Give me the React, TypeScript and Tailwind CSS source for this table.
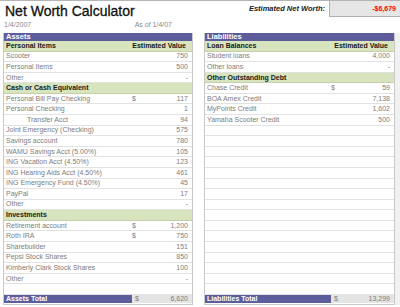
type Row =
  | { kind: 'sub'; label: string; right?: string }
  | { kind: 'item'; label: string; value: string; dollar?: boolean; indent?: boolean }
  | { kind: 'blank' }

const assets: Row[] = [
  { kind: 'sub', label: 'Personal Items', right: 'Estimated Value' },
  { kind: 'item', label: 'Scooter', value: '750' },
  { kind: 'item', label: 'Personal Items', value: '500' },
  { kind: 'item', label: 'Other', value: '-' },
  { kind: 'sub', label: 'Cash or Cash Equivalent' },
  { kind: 'item', label: 'Personal Bill Pay Checking', value: '117', dollar: true },
  { kind: 'item', label: 'Personal Checking', value: '1' },
  { kind: 'item', label: 'Transfer Acct', value: '94', indent: true },
  { kind: 'item', label: 'Joint Emergency (Checking)', value: '575' },
  { kind: 'item', label: 'Savings account', value: '780' },
  { kind: 'item', label: 'WAMU Savings Acct (5.00%)', value: '105' },
  { kind: 'item', label: 'ING Vacation Acct (4.50%)', value: '123' },
  { kind: 'item', label: 'ING Hearing Aids Acct (4.50%)', value: '461' },
  { kind: 'item', label: 'ING Emergency Fund (4.50%)', value: '45' },
  { kind: 'item', label: 'PayPal', value: '17' },
  { kind: 'item', label: 'Other', value: '-' },
  { kind: 'sub', label: 'Investments' },
  { kind: 'item', label: 'Retirement account', value: '1,200', dollar: true },
  { kind: 'item', label: 'Roth IRA', value: '750', dollar: true },
  { kind: 'item', label: 'Sharebuilder', value: '151' },
  { kind: 'item', label: 'Pepsi Stock Shares', value: '850' },
  { kind: 'item', label: 'Kimberly Clark Stock Shares', value: '100' },
  { kind: 'item', label: 'Other', value: '-' },
  { kind: 'blank' },
]

const liabilities: Row[] = [
  { kind: 'sub', label: 'Loan Balances', right: 'Estimated Value' },
  { kind: 'item', label: 'Student loans', value: '4,000' },
  { kind: 'item', label: 'Other loans', value: '-' },
  { kind: 'sub', label: 'Other Outstanding Debt' },
  { kind: 'item', label: 'Chase Credit', value: '59', dollar: true },
  { kind: 'item', label: 'BOA Amex Credit', value: '7,138' },
  { kind: 'item', label: 'MyPoints Credit', value: '1,602' },
  { kind: 'item', label: 'Yamaha Scooter Credit', value: '500' },
  ...Array.from({ length: 16 }, () => ({ kind: 'blank' } as Row)),
]

function Panel({ title, rows, totalLabel, total, dollarCol }: {
  title: string
  rows: Row[]
  totalLabel: string
  total: string
  dollarCol: string
}) {
  return (
    <div className="flex flex-col border-x border-b border-[#c9c9c9] h-[272px]">
      {/* section header */}
      <div className="h-[8px] bg-[#5d5d9c] text-white font-bold text-[7.5px] leading-[8px] pl-[2px]">{title}</div>

      <div className="flex flex-col h-[254px]">
        {rows.map((r, i) => {
          if (r.kind === 'sub') {
            return (
              <div key={i} className="flex-1 min-h-0 flex items-center bg-[#d7e4bd] border-b border-[#c4d0ab] px-[2px] text-[7px] leading-[8px] font-bold text-[#1a1a1a]">
                <span className="flex-1">{r.label}</span>
                {r.right && <span className="pr-[4px]">{r.right}</span>}
              </div>
            )
          }
          if (r.kind === 'blank') {
            return <div key={i} className="flex-1 min-h-0 border-b border-[#e2e2e2]" />
          }
          return (
            <div key={i} className="flex-1 min-h-0 flex items-center border-b border-[#e2e2e2] text-[7px] leading-[8px] text-[#7d7d7d]">
              <span className={`${dollarCol} ${r.indent ? 'pl-[23px]' : 'pl-[2px]'}`}>{r.label}</span>
              <span className="w-[14px]">{r.dollar ? '$' : ''}</span>
              <span className="flex-1 text-right pr-[4px]">{r.value}</span>
            </div>
          )
        })}
      </div>

      {/* total */}
      <div className="h-[8px] flex items-stretch text-[7px] leading-[8px]">
        <div className={`${dollarCol} bg-[#5d5d9c] text-white font-bold pl-[2px]`}>{totalLabel}</div>
        <div className="flex-1 flex bg-[#e4e4e4] text-[#7d7d7d]">
          <span className="w-[14px] pl-[3px]">$</span>
          <span className="flex-1 text-right pr-[4px]">{total}</span>
        </div>
      </div>
    </div>
  )
}

export default function App() {
  return (
    <div className="w-[400px] h-[307px] bg-white overflow-hidden font-['Liberation_Sans',Arial,sans-serif] border-t border-[#b5b5b5]">
      <div className="flex justify-between h-[32px]">
        <div className="w-[172px] pl-[5px]">
          <div className="text-[14px] leading-[16px] pt-[2px] text-[#111] [-webkit-text-stroke:0.3px_#111]">Net Worth Calculator</div>
          <div className="flex justify-between text-[7px] leading-[8px] text-[#8a8a8a] mt-[2px] -ml-[1px]">
            <span>1/4/2007</span>
            <span>As of 1/4/07</span>
          </div>
        </div>
        <div className="flex items-start">
          <div className="text-[7.5px] leading-[8px] font-bold italic text-[#222] pt-[4px] pr-[4px]">Estimated Net Worth:</div>
          <div className="w-[71px] h-[16px] bg-[#e6e6e6] border-l border-b border-[#b0b0b0] flex items-center justify-end pr-[4px] text-[7px] leading-[8px] font-bold text-[#ff0000]">
            -$6,679
          </div>
        </div>
      </div>

      <div className="flex pl-[3px]">
        <div className="w-[190px]">
          <Panel title="Assets" rows={assets} totalLabel="Assets Total" total="6,620" dollarCol="w-[128px]" />
        </div>
        <div className="w-[11px]" />
        <div className="w-[191px]">
          <Panel title="Liabilities" rows={liabilities} totalLabel="Liabilities Total" total="13,299" dollarCol="w-[126px]" />
        </div>
        <div className="flex-1 bg-[#f1f1f1]" />
      </div>
    </div>
  )
}
